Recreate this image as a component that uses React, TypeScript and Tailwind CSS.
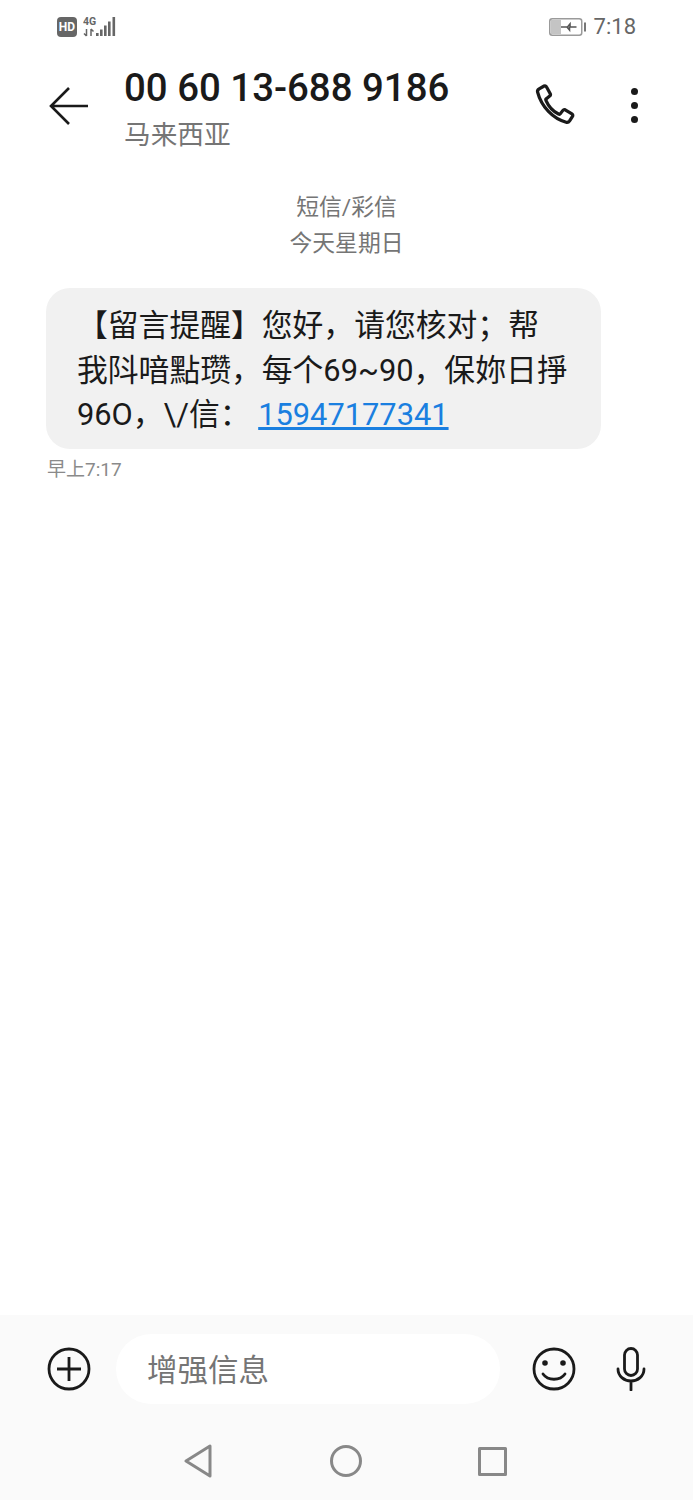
const cjk = "font-['Roboto','Noto_Sans_CJK_SC',sans-serif]";

const Signal = () => (
  <div className="flex items-center gap-[6px]">
    <div className="flex h-[20px] w-[20px] items-center justify-center rounded-[4px] bg-[#666666] text-[12px] font-bold leading-none text-white">HD</div>
    <svg width="33" height="22" viewBox="0 0 33 22" fill="#666666">
      <text x="0" y="8.500" fontSize="10.500" fontWeight="700" fontFamily="Roboto, sans-serif">4G</text>
      <path d="M3.500 13v7M1 17.500l2.500 2.500M8 13v7M8 13l2.500 2.500" stroke="#666666" strokeWidth="1.500" fill="none" />
      <rect x="13" y="17" width="2.600" height="3" />
      <rect x="17" y="13.500" width="2.600" height="6.500" />
      <rect x="21" y="9.500" width="2.600" height="10.500" />
      <rect x="25" y="5.500" width="2.600" height="14.500" />
      <rect x="29.500" y="1" width="2.600" height="19" />
    </svg>
  </div>
);

const Battery = () => (
  <svg width="37" height="18" viewBox="0 0 37 18" fill="none">
    <rect x="0.750" y="0.750" width="32" height="16.500" rx="2.500" stroke="#9a9a9a" strokeWidth="1.500" />
    <rect x="2" y="2" width="10" height="14" fill="#c4c4c4" />
    <path d="M12 9h6.500l2.500-3v3h6.500" stroke="#555555" strokeWidth="1.600" />
    <path d="M18 9l2.500 3V9" stroke="#555555" strokeWidth="1.600" />
    <rect x="35" y="4.500" width="2" height="9" fill="#777777" />
  </svg>
);

export default function App() {
  return (
    <div className={`flex h-[1500px] w-[693px] flex-col overflow-hidden bg-white ${cjk}`}>
      <div className="flex h-[53px] items-center justify-between pl-[57px] pr-[57px]">
        <Signal />
        <div className="flex items-center gap-[8px]">
          <Battery />
          <span className="text-[22px] leading-none text-[#666666]">7:18</span>
        </div>
      </div>

      <div className="flex h-[106px] items-start pl-[48px] pr-[55px]">
        <svg width="42" height="42" viewBox="0 0 42 42" fill="none" className="mt-[32px] shrink-0" stroke="#1a1a1a" strokeWidth="2.600">
          <path d="M40 21H4M21 3L3 21l18 18" />
        </svg>
        <div className="ml-[34px] flex-1">
          <div className="mt-[13px] whitespace-nowrap text-[38.400px] font-medium leading-[44px] text-[#1a1a1a]">00 60 13-688 9186</div>
          <div className="mt-[8px] text-[26.700px] leading-[34px] text-[#757575]">马来西亚</div>
        </div>
        <svg width="46" height="46" viewBox="0 0 24 24" fill="none" className="mt-[29px] shrink-0" stroke="#1a1a1a" strokeWidth="1.700" strokeLinejoin="round">
          <path d="M3.200 3.600l2.600-1.500c.5-.3 1 0 1.200.4l2 3.600c.2.4.1.9-.3 1.200L7 8.700c-.3.2-.4.6-.2 1 1.300 3 3.500 5.500 6.500 7 .4.200.8.100 1-.2l1.300-1.700c.3-.4.8-.5 1.200-.3l3.500 2.100c.5.300.6.900.3 1.300l-1.500 2.400c-.4.600-1.100.900-1.800.7C10.500 19.200 4.400 13 2.400 5.300c-.2-.7.200-1.300.8-1.700z" />
        </svg>
        <div className="ml-[52px] mt-[35px] flex shrink-0 flex-col gap-[7px]">
          <div className="size-[7px] rounded-full bg-[#1a1a1a]" />
          <div className="size-[7px] rounded-full bg-[#1a1a1a]" />
          <div className="size-[7px] rounded-full bg-[#1a1a1a]" />
        </div>
      </div>

      <div className="mt-[31px] text-center text-[22.800px] leading-[36px] text-[#757575]">
        <div>短信/彩信</div>
        <div>今天星期日</div>
      </div>

      <div className="ml-[46px] mt-[26px] h-[161px] w-[555px] rounded-[24px] bg-[#f1f1f1] pl-[31px] pr-[20px] pt-[16px] text-[30.800px] leading-[44.500px] text-[#1a1a1a]">
        <div className="whitespace-nowrap">【留言提醒】您好，请您核对；帮</div>
        <div className="whitespace-nowrap">我阧喑點瓒，每个69~90，保妳日掙</div>
        <div className="whitespace-nowrap">
          96O，\/信： <span className="text-[#1a7fe0] underline">15947177341</span>
        </div>
      </div>
      <div className="ml-[47px] mt-[7px] text-[19px] leading-[28px] text-[#8a8a8a]">早上7:17</div>

      <div className="mt-auto flex h-[185px] flex-col bg-[#fafafa]">
        <div className="mt-[19px] flex h-[70px] items-center pl-[47px]">
          <svg width="44" height="44" viewBox="0 0 44 44" fill="none" stroke="#1a1a1a" strokeWidth="2.800" className="shrink-0">
            <circle cx="22" cy="22" r="20" />
            <path d="M10 22h24M22 10v24" />
          </svg>
          <div className="ml-[25px] flex h-[70px] w-[384px] shrink-0 items-center rounded-full bg-white pl-[31px] pt-[3px] text-[30.500px] text-[#757575]">增强信息</div>
          <svg width="44" height="44" viewBox="0 0 44 44" fill="none" stroke="#1a1a1a" strokeWidth="2.800" strokeLinecap="round" className="ml-[32px] shrink-0">
            <circle cx="22" cy="22" r="20" />
            <path d="M11 27c5 7 17 7 22 0" />
            <circle cx="13" cy="16" r="1.400" fill="#1a1a1a" />
            <circle cx="31" cy="16" r="1.400" fill="#1a1a1a" />
          </svg>
          <svg width="30" height="44" viewBox="0 0 30 44" fill="none" stroke="#1a1a1a" strokeWidth="2.800" strokeLinecap="round" className="ml-[40px] shrink-0">
            <rect x="8.500" y="1.500" width="13" height="27" rx="6.500" />
            <path d="M2 22c0 7 6 12 13 12s13-5 13-12M15 34v9" />
          </svg>
        </div>
        <div className="mt-[40px] flex items-center">
          <svg width="30" height="34" viewBox="0 0 30 34" fill="none" stroke="#888888" strokeWidth="3" strokeLinejoin="round" className="ml-[183px] shrink-0">
            <path d="M27 2v30L3 17z" />
          </svg>
          <svg width="32" height="32" viewBox="0 0 32 32" fill="none" stroke="#888888" strokeWidth="3" className="ml-[117px] shrink-0">
            <circle cx="16" cy="16" r="14.500" />
          </svg>
          <svg width="29" height="29" viewBox="0 0 29 29" fill="none" stroke="#888888" strokeWidth="3" strokeLinejoin="round" className="ml-[116px] shrink-0">
            <rect x="1.500" y="1.500" width="26" height="26" />
          </svg>
        </div>
      </div>
    </div>
  );
}
